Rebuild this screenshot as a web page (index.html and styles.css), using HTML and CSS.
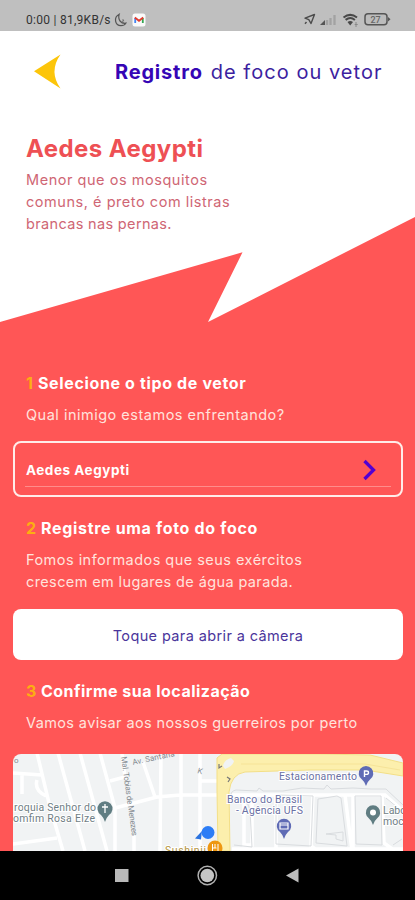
FILE: index.html
```html
<!DOCTYPE html>
<html lang="pt-BR">
<head>
<meta charset="utf-8">
<meta name="viewport" content="width=device-width, initial-scale=1">
<title>Registro de foco ou vetor</title>
<link rel="stylesheet" href="styles.css">
</head>
<body>
<div class="phone">
  <div class="status">
    <span class="status-text">0:00 | 81,9KB/s</span>
    <svg class="moon" width="13" height="14" viewBox="0 0 13 14"><path d="M5.2 1.2C-.6 4.2.8 12.6 7 12.7c2.200 0 3.800-.8 4.800-2.500C7.600 11 3.400 7.200 5.200 1.200z" fill="none" stroke="#555" stroke-width="1.200"/><path d="M8 7h2L8 9.300h2.200" fill="none" stroke="#666" stroke-width=".8"/></svg>
    <svg class="mail" width="14" height="14" viewBox="0 0 14 14"><rect x=".5" y=".5" width="13" height="13" rx="2.500" fill="#fafafa"/><path d="M3.200 10V5" stroke="#4285f4" stroke-width="1.800"/><path d="M10.800 10V5" stroke="#34a853" stroke-width="1.800"/><path d="M2.800 4.600L7 7.800l4.200-3.200" fill="none" stroke="#e33b2e" stroke-width="1.900"/></svg>
    <span class="grow"></span>
    <svg class="signals" width="88" height="16" viewBox="303 12 88 16">
      <path d="M314.500 14.500l-3.500 9-2.200-3.800-3.800-1.500zM306.500 22l-1.500 1.800" fill="none" stroke="#4c4c4c" stroke-width="1.400" stroke-linejoin="round"/>
      <path d="M320 25l5-5v5z" fill="#555"/><path d="M327 25v-5M330.500 25v-7M334.500 25V15" stroke="#a2a2a2" stroke-width="2.300"/>
      <path d="M343.500 17.500q6.700-5.300 13.500 0M345.600 19.900q4.700-3.800 9.300 0" fill="none" stroke="#484848" stroke-width="2"/><path d="M347.500 22q2.700-2.200 5.500 0l-2.800 3.500z" fill="#484848"/><path d="M356 22v5M354.700 24.500h3" stroke="#888"/>
      <rect x="365" y="13.800" width="22" height="11" rx="3" fill="#bcbcbc" stroke="#555" stroke-width="1.500"/><path d="M388 17l2.500 2.300-2.500 2.300z" fill="#555"/>
      <text x="370.500" y="22.500" class="battery">27</text>
    </svg>
  </div>
  <header class="hero">
    <svg class="hero-shape" width="415" height="105" viewBox="0 217 415 105"><path d="M0 322L242.500 252.300 208 322 415 217V323H0z" fill="#ff5656"/></svg>
    <div class="bar">
      <svg class="back" width="28" height="36" viewBox="33 54 28 36"><path d="M34 71.300L60.500 54.500Q48.500 71.500 60.500 88.500z" fill="#fcc50a"/></svg>
      <h1 class="page-title"><b>Registro</b><span>de foco ou vetor</span></h1>
    </div>
    <h2 class="name">Aedes Aegypti</h2>
    <p class="about">Menor que os mosquitos<br>comuns, é preto com listras<br><span class="tight">brancas nas pernas.</span></p>
  </header>
  <main class="steps">
    <h3 class="step s1"><i>1</i><span>Selecione o tipo de vetor</span></h3>
    <p class="hint hint1">Qual inimigo estamos enfrentando?</p>
    <div class="select">
      <div class="field"><span class="value">Aedes Aegypti</span>
      <svg width="14" height="22" viewBox="0 0 14 22"><path d="M1.500 2l9 9-9 9" fill="none" stroke="#5200d2" stroke-width="3.300"/></svg></div>
    </div>
    <h3 class="step s2"><i>2</i><span>Registre uma foto do foco</span></h3>
    <p class="hint"><span class="wide">Fomos informados que seus exércitos</span><br>crescem em lugares de água parada.</p>
    <button class="camera">Toque para abrir a câmera</button>
    <h3 class="step s3"><i>3</i><span>Confirme sua localização</span></h3>
    <p class="hint">Vamos avisar aos nossos guerreiros por perto</p>
    <svg class="map" width="390" height="97" viewBox="13 754 390 97">
      <rect x="13" y="754" width="390" height="97" fill="#f1f3f4"/>
      <g fill="none" stroke="#fff" stroke-width="3.500">
        <path d="M37 753L49 803 63 851M58 753L85 851M80 753L107 851M100 753L115 808V851M110 781L125 777 122 754M115 808L157 797 180 795H220M143 762L155 797M161 754L160 851M181 754V851M200 754V851M13 773L42 775M22 775V794M37 780Q34 790 46 796M13 844L57 838M134 835V851M199 781h20M232 795H385L403 811M244 795V845H252V795M276 795V851M313 795L311 846 318 851M345 795L352 851M353 795V851M382 795L384 843 395 851M232 849H403"/>
      </g>
      <g fill="none" stroke="#d9dcdf" stroke-width="1">
        <path d="M231 795q0-4 5-5l21 1 2-3 4 3h20l19-3 22 1 3-4 4 4 22-1 18 1h15l17 16M232 802q15-7 18 8l2 37-18-2M276 800v44l35 2 2-50-36-1M318 799l19-3 4 2 6 48-31-3zM326 834l17-2v9l-7-2v-4zM355 796h26l1 49-26-1zM386 798l17 14M393 845l9-6"/>
      </g>
      <path d="M217 758L222 754H320L370 755 403 763V776L365 770 310 770 245 772Q231 774 229 792L230 851H218L217 790z" fill="#fcefad" stroke="#f3df87" stroke-width="1"/>
      <path d="M223 766Q224 760 231 758L234 761Q233 766 225 769z" fill="#f1f3f4"/>
      <path d="M241 764L310 764 365 764 400 770" fill="none" stroke="#f5e398" stroke-width="1.200"/>
      <path d="M219 764v4l3-2M227 777l3 2-2 3" fill="none" stroke="#777" stroke-width="1.200"/>
      <g class="street">
        <text transform="translate(133 765) rotate(-12)" textLength="43">Av. Santana</text>
        <text transform="translate(121 757) rotate(82)" textLength="80">Mal. Tobias de Menezes</text>
        <text x="14" y="763">o</text><text x="197" y="773" transform="rotate(15 197 773)">K</text>
      </g>
      <g class="poi church"><text x="14" y="811" textLength="82">roquia Senhor do</text><text x="13" y="822" textLength="82">omfim Rosa Elze</text></g>
      <path d="M105 822q-1-4-4-7a7.500 7.500 0 1 1 8 0q-3 3-4 7z" fill="#607d82"/><path d="M105 804v9M102 807h6" stroke="#fff" stroke-width="1.300"/>
      <g class="poi place"><text x="279" y="780" textLength="78">Estacionamento</text><text x="227" y="803" textLength="75">Banco do Brasil</text><text x="236" y="814" textLength="67">- Agência UFS</text></g>
      <path d="M366 786q-1-4-4-6.500a7.300 7.300 0 1 1 8 0q-3 2.500-4 6.500z" fill="#5f6bb5"/><path d="M364.500 777v-6h2q2 0 2 1.700t-2 1.700h-2" fill="none" stroke="#fff" stroke-width="1.400"/>
      <path d="M284 839q-1-4-4-7a7.200 7.200 0 1 1 8 0q-3 3-4 7z" fill="#5f6bb5"/><path d="M280 823h8v6h-8zM280 825h8" fill="none" stroke="#fff" stroke-width="1.200"/>
      <path d="M373 825q-1-4-4-6.500a7.200 7.200 0 1 1 8 0q-3 2.500-4 6.500z" fill="#607d82"/><circle cx="373" cy="812.500" r="3" fill="#fff"/>
      <g class="poi church"><text x="383" y="814">Labo</text><text x="383" y="825">moc</text></g>
      <text class="poi sushi" x="165" y="854" textLength="41">Sushinii</text>
      <path d="M202 831l-7 7.500 6 1z" fill="#2b73df"/><circle cx="208" cy="832.500" r="6.500" fill="#2c7df6"/>
      <circle cx="215" cy="848" r="7.500" fill="#ee9712"/><path d="M212.500 844v7M215 844v4M218 844v7M212.500 848h4" stroke="#fff" stroke-width="1"/>
    </svg>
  </main>
  <nav class="nav">
    <svg width="415" height="49" viewBox="0 851 415 49"><rect x="115" y="869" width="13.500" height="13" fill="#b9b9b9"/><circle cx="207.300" cy="875.500" r="9.200" fill="none" stroke="#b0b0b0" stroke-width="1.500"/><circle cx="207.300" cy="875.500" r="6.800" fill="#c5c5c5"/><path d="M286 875.500L298.500 868.500V882.500z" fill="#bcbcbc"/></svg>
  </nav>
</div>
</body>
</html>
```
FILE: styles.css
```css
* { box-sizing: border-box; margin: 0; padding: 0; }
body { width: 415px; height: 900px; overflow: hidden; background: #ff5656; font-family: Inter, "Liberation Sans", sans-serif; }
svg { display: block; flex: none; }
.phone { width: 415px; height: 900px; display: flex; flex-direction: column; overflow: hidden; }
.status { height: 31px; flex: none; background: #bfbfbf; display: flex; align-items: center; padding: 8px 24px 0 26px; color: #444; }
.status-text { font: 400 12px/16px Roboto, sans-serif; letter-spacing: .27px; color: #333; white-space: nowrap; }
.moon { margin-left: 3px; }
.mail { margin-left: 5px; }
.grow { flex: 1; }
.battery { font: 500 9px Roboto, sans-serif; fill: #666; }
.hero { height: 291px; flex: none; background: #fff; position: relative; padding-left: 26px; }
.hero-shape { position: absolute; left: 0; bottom: 0; }
.bar { height: 82px; display: flex; align-items: center; padding-left: 7px; }
.page-title { font-weight: 400; font-size: 20px; line-height: 24px; color: #3d1f9f; margin-left: 54px; display: flex; gap: 8px; letter-spacing: 1.04px; white-space: nowrap; }
.page-title b { color: #3505b5; font-weight: 700; letter-spacing: .8px; }
.name { color: #ee5054; font-size: 24px; line-height: 30px; margin-top: 21px; letter-spacing: .42px; white-space: nowrap; }
.about { position: relative; color: #cf6674; font-size: 14.5px; line-height: 22px; margin-top: 5px; letter-spacing: .54px; white-space: nowrap; }
.tight { letter-spacing: .34px; }
.steps { flex: 1; min-height: 0; background: #ff5656; padding: 0 12px 0 13px; overflow: hidden; }
.step { color: #fff; font-size: 16px; line-height: 20px; font-weight: 700; display: flex; margin-left: 13px; letter-spacing: .68px; white-space: nowrap; }
.step i { font-style: normal; color: #fcae12; width: 15px; }
.s1 { margin-top: 51px; letter-spacing: .64px; }
.s1 i { width: 12px; }
.hint { color: #ffe3dd; font-size: 14.5px; line-height: 22px; margin: 11px 0 0 13px; letter-spacing: .38px; white-space: nowrap; }
.hint1 { letter-spacing: .5px; }
.wide { letter-spacing: .47px; }
.select { height: 56px; margin-top: 15px; border: 2px solid #ffece9; border-radius: 8px; padding: 0 10px 8px; }
.field { height: 44px; border-bottom: 1px solid #ff8d8b; display: flex; align-items: center; justify-content: space-between; padding: 10px 14px 0 1px; color: #fff; }
.value { font-size: 13.5px; font-weight: 700; letter-spacing: .53px; }
.s2 { margin-top: 21px; }
.camera { display: block; width: 390px; height: 51px; margin-top: 16px; padding-top: 2px; border: 0; border-radius: 8px; background: #fff; color: #4a359b; font: 400 14.5px/20px Inter, sans-serif; letter-spacing: .38px; }
.s3 { margin-top: 21px; letter-spacing: .48px; }
.map { margin-top: 20px; border-radius: 8px 8px 0 0; }
.street { font: 8px Roboto, sans-serif; fill: #858b91; }
.poi { font: 400 10.5px Roboto, sans-serif; stroke: #fff; stroke-width: 2px; paint-order: stroke; }
.church { fill: #6f7e85; }
.place { fill: #6970a4; }
.sushi { fill: #b4933a; }
.nav { height: 49px; flex: none; background: #000; }
```
